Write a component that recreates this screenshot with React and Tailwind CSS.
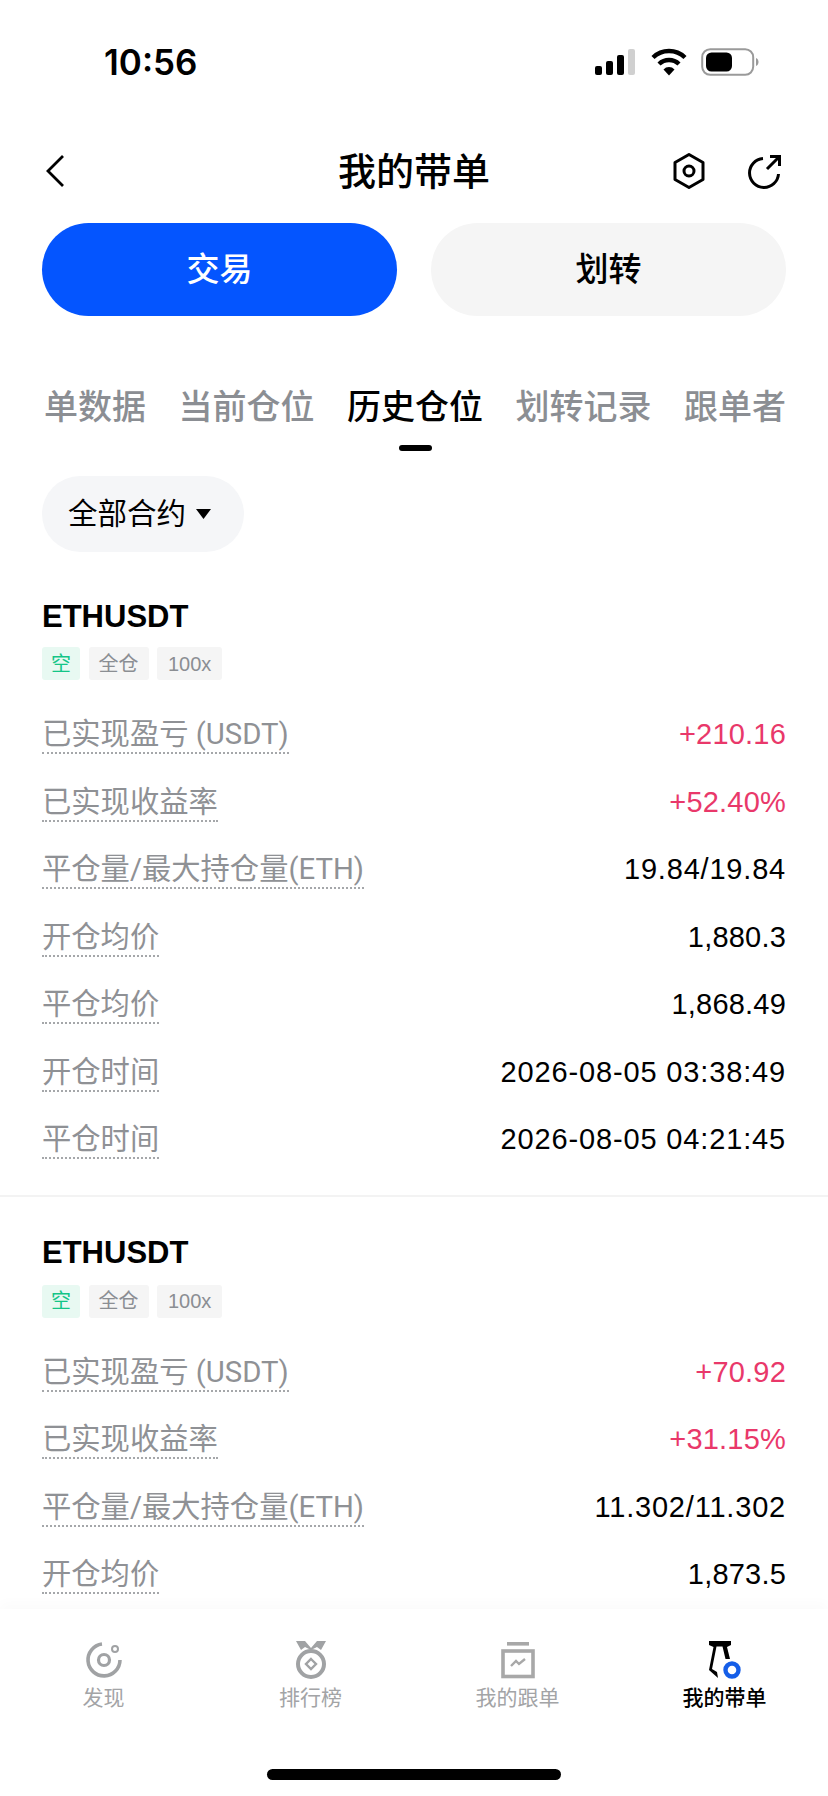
const fontStack = { fontFamily: 'Inter, "Noto Sans CJK SC", sans-serif' };
const latinStack = { fontFamily: '"Liberation Sans", "Noto Sans CJK SC", sans-serif' };
const labelStack = { fontFamily: 'Roboto, "Noto Sans CJK SC", sans-serif' };

const positions = [
  {
    rows: [
      ["已实现盈亏 (USDT)", "+210.16", true],
      ["已实现收益率", "+52.40%", true],
      ["平仓量/最大持仓量(ETH)", "19.84/19.84"],
      ["开仓均价", "1,880.3"],
      ["平仓均价", "1,868.49"],
      ["开仓时间", "2026-08-05 03:38:49"],
      ["平仓时间", "2026-08-05 04:21:45"],
    ],
  },
  {
    rows: [
      ["已实现盈亏 (USDT)", "+70.92", true],
      ["已实现收益率", "+31.15%", true],
      ["平仓量/最大持仓量(ETH)", "11.302/11.302"],
      ["开仓均价", "1,873.5"],
    ],
  },
];

const tabs = ["单数据", "当前仓位", "历史仓位", "划转记录", "跟单者"];

const StatusBar = () => (
  <div className="flex h-[124px] items-center justify-between pl-[104px] pr-[69px] shrink-0">
    <span className="text-[35px] font-semibold leading-none text-black">10:56</span>
    <div className="flex items-center gap-[14px]">
      <svg width="42" height="26" viewBox="0 0 42 26">
        <rect x="0" y="17" width="7" height="9" rx="2" fill="#000" />
        <rect x="11" y="12" width="7" height="14" rx="2" fill="#000" />
        <rect x="22" y="6" width="7" height="20" rx="2" fill="#000" />
        <rect x="33" y="0" width="7" height="26" rx="2" fill="#d0d0d0" />
      </svg>
      <svg width="36" height="28" viewBox="0 0 36 28">
        <path d="M2 9.500a23 23 0 0 1 32 0" fill="none" stroke="#000" strokeWidth="4.400" />
        <path d="M8 16a14.500 14.500 0 0 1 20 0" fill="none" stroke="#000" strokeWidth="4.400" />
        <path d="M12.500 21.500a7.500 7.500 0 0 1 11 0L18 27.500z" fill="#000" />
      </svg>
      <svg width="58" height="28" viewBox="0 0 58 28">
        <rect x="1.200" y="1.200" width="51" height="25.600" rx="8" fill="none" stroke="#9a9a9a" strokeWidth="2" />
        <rect x="5" y="4.500" width="26" height="19" rx="5.500" fill="#000" />
        <path d="M55 10c2 1 2.500 2.500 2.500 4s-.5 3-2.500 4z" fill="#9a9a9a" />
      </svg>
    </div>
  </div>
);

const Header = () => (
  <div className="flex h-[94px] items-center justify-between px-[42px] shrink-0">
    <svg width="24" height="36" viewBox="0 0 24 36" className="ml-[1px]">
      <path d="M20 3 5 18l15 15" fill="none" stroke="#000" strokeWidth="2.800" />
    </svg>
    <span className="text-[38px] font-medium leading-none text-black ml-[90px]">我的带单</span>
    <div className="flex items-center gap-[40px] pr-[3px]">
      <svg width="36" height="38" viewBox="0 0 36 38">
        <path d="M18 2.500 32 10.500v17L18 35.500 4 27.500v-17z" fill="none" stroke="#000" strokeWidth="3" strokeLinejoin="round" />
        <circle cx="18" cy="19" r="5" fill="none" stroke="#000" strokeWidth="3" />
      </svg>
      <svg width="36" height="36" viewBox="0 0 36 36">
        <path d="M16 5.500A14.500 14.500 0 1 0 31.500 21" fill="none" stroke="#000" strokeWidth="3" />
        <path d="M20 16 32 4M23 3.500h9.500V13" fill="none" stroke="#000" strokeWidth="3" />
      </svg>
    </div>
  </div>
);

const ActionButtons = () => (
  <div className="grid grid-cols-2 gap-[34px] px-[42px] mt-[5px] shrink-0">
    <button className="h-[93px] rounded-full bg-[#0455ff] text-[33px] font-medium text-white">交易</button>
    <button className="h-[93px] rounded-full bg-[#f5f5f5] text-[33px] font-medium text-black">划转</button>
  </div>
);

const Tabs = () => (
  <div className="flex pl-[44px] gap-[32.500px] mt-[65px] shrink-0">
    {tabs.map((tab) => (
      <div key={tab} className="relative">
        <span className={`block text-[34px] leading-[52px] whitespace-nowrap font-medium ${tab === "历史仓位" ? "text-black" : "text-[#8b8e93]"}`}>
          {tab}
        </span>
        {tab === "历史仓位" && (
          <div className="absolute left-[52px] top-[64px] h-[6px] w-[33px] rounded-full bg-black" />
        )}
      </div>
    ))}
  </div>
);

const Tag = ({ children, green, wide }) => (
  <span
    className={`flex h-[33px] items-center rounded-[3px] text-[20px] leading-none ${green ? "px-[9px] bg-[#e8f9f2] text-[#14c587]" : wide ? "px-[11px] bg-[#f5f5f5] text-[#8b8e93]" : "px-[10px] bg-[#f5f5f5] text-[#8b8e93]"}`}
    style={latinStack}
  >
    {children}
  </span>
);

const valueSpacing = (value) => {
  if (value.includes("-")) return "tracking-[0.85px]";
  if (value.includes("/")) return "tracking-[0.8px]";
  return "tracking-[0.2px]";
};

const Row = ({ label, value, red }) => (
  <div className="flex h-[67.500px] items-center justify-between">
    <span className="border-b-2 border-dotted border-[#a5a7aa] pt-[2px] text-[29.300px] leading-[35px] text-[#8f9195]" style={labelStack}>
      {label}
    </span>
    <span className={`text-[29px] leading-none ${valueSpacing(value)} ${red ? "text-[#e9386a]" : "text-black"}`} style={latinStack}>
      {value}
    </span>
  </div>
);

const Position = ({ rows, first }) => (
  <div className={first ? "pb-[21px] border-b-2 border-[#f3f3f3]" : "pt-[36px]"}>
    <div className="px-[42px]">
      <div className="text-[31px] font-bold leading-[40px] text-black" style={latinStack}>ETHUSDT</div>
      <div className={`flex gap-[8.500px] mb-[21px] ${first ? "mt-[10px]" : "mt-[12px]"}`}>
        <Tag green>空</Tag>
        <Tag>全仓</Tag>
        <Tag wide>100x</Tag>
      </div>
      {rows.map((row) => (
        <Row key={row[0] + row[1]} label={row[0]} value={row[1]} red={row[2]} />
      ))}
    </div>
  </div>
);

const navItems = [
  {
    label: "发现",
    icon: (
      <svg width="38" height="38" viewBox="0 0 38 38">
        <path d="M17 3A16 16 0 1 0 35 19" fill="none" stroke="#a0a2a4" strokeWidth="3.600" />
        <circle cx="19" cy="19" r="5.500" fill="none" stroke="#a0a2a4" strokeWidth="3.200" />
        <circle cx="30" cy="8" r="3" fill="none" stroke="#a0a2a4" strokeWidth="2" />
      </svg>
    ),
  },
  {
    label: "排行榜",
    icon: (
      <svg width="34" height="40" viewBox="0 0 34 40">
        <path d="M2 1h9l6 7 6-7h9l-5 9-4-3-6 3-6-3-4 3z" fill="#a0a2a4" />
        <circle cx="17" cy="24" r="13" fill="#fff" stroke="#a0a2a4" strokeWidth="4" />
        <path d="M17 19 22 24 17 29 12 24z" fill="none" stroke="#a0a2a4" strokeWidth="2.400" />
      </svg>
    ),
  },
  {
    label: "我的跟单",
    icon: (
      <svg width="34" height="38" viewBox="0 0 34 38">
        <rect x="6" y="1" width="22" height="3.600" fill="#a8a8a8" />
        <rect x="2" y="10" width="30" height="25.500" fill="none" stroke="#a8a8a8" strokeWidth="3.600" />
        <path d="M10 25l5-5 3 3 6-5" fill="none" stroke="#a8a8a8" strokeWidth="2.400" />
      </svg>
    ),
  },
  {
    label: "我的带单",
    active: true,
    icon: (
      <svg width="34" height="40" viewBox="0 0 34 40">
        <path d="M1 1h22v4l-4 2 3 12h-4.500L14.500 6.500h-6L4 29l5 3 1 6-9-8 4.500-23L1 5z" fill="#000" />
        <circle cx="24" cy="30" r="6.500" fill="#fff" stroke="#155ee8" strokeWidth="4.400" />
      </svg>
    ),
  },
];

const BottomNav = () => (
  <div className="bg-white shrink-0 shadow-[0_-6px_12px_rgba(0,0,0,0.02)]">
    <div className="grid grid-cols-4 pt-[31px]">
      {navItems.map((item) => (
        <div key={item.label} className="flex flex-col items-center">
          <div className="flex h-[40px] items-center justify-center">{item.icon}</div>
          <span className={`mt-[4px] text-[21px] leading-[28px] ${item.active ? "text-black font-medium" : "text-[#a3a4a6]"}`}>
            {item.label}
          </span>
        </div>
      ))}
    </div>
    <div className="flex justify-center pt-[57px] pb-[16px]">
      <div className="h-[11px] w-[294px] rounded-full bg-black" />
    </div>
  </div>
);

export default function App() {
  return (
    <div className="flex h-[1796px] w-[828px] flex-col overflow-hidden bg-white" style={fontStack}>
      <StatusBar />
      <Header />
      <ActionButtons />
      <Tabs />
      <div className="mt-[43px] ml-[42px] flex h-[76px] w-[202px] items-center gap-[10px] pl-[26px] rounded-full bg-[#f5f6f8] shrink-0">
        <span className="text-[29.500px] leading-none text-black">全部合约</span>
        <svg width="15" height="10" viewBox="0 0 15 10">
          <path d="M0 0h15L7.500 10z" fill="#000" />
        </svg>
      </div>
      <div className="flex-1 overflow-hidden mt-[45px]">
        {positions.map((position, i) => (
          <Position key={i} rows={position.rows} first={i === 0} />
        ))}
      </div>
      <BottomNav />
    </div>
  );
}
